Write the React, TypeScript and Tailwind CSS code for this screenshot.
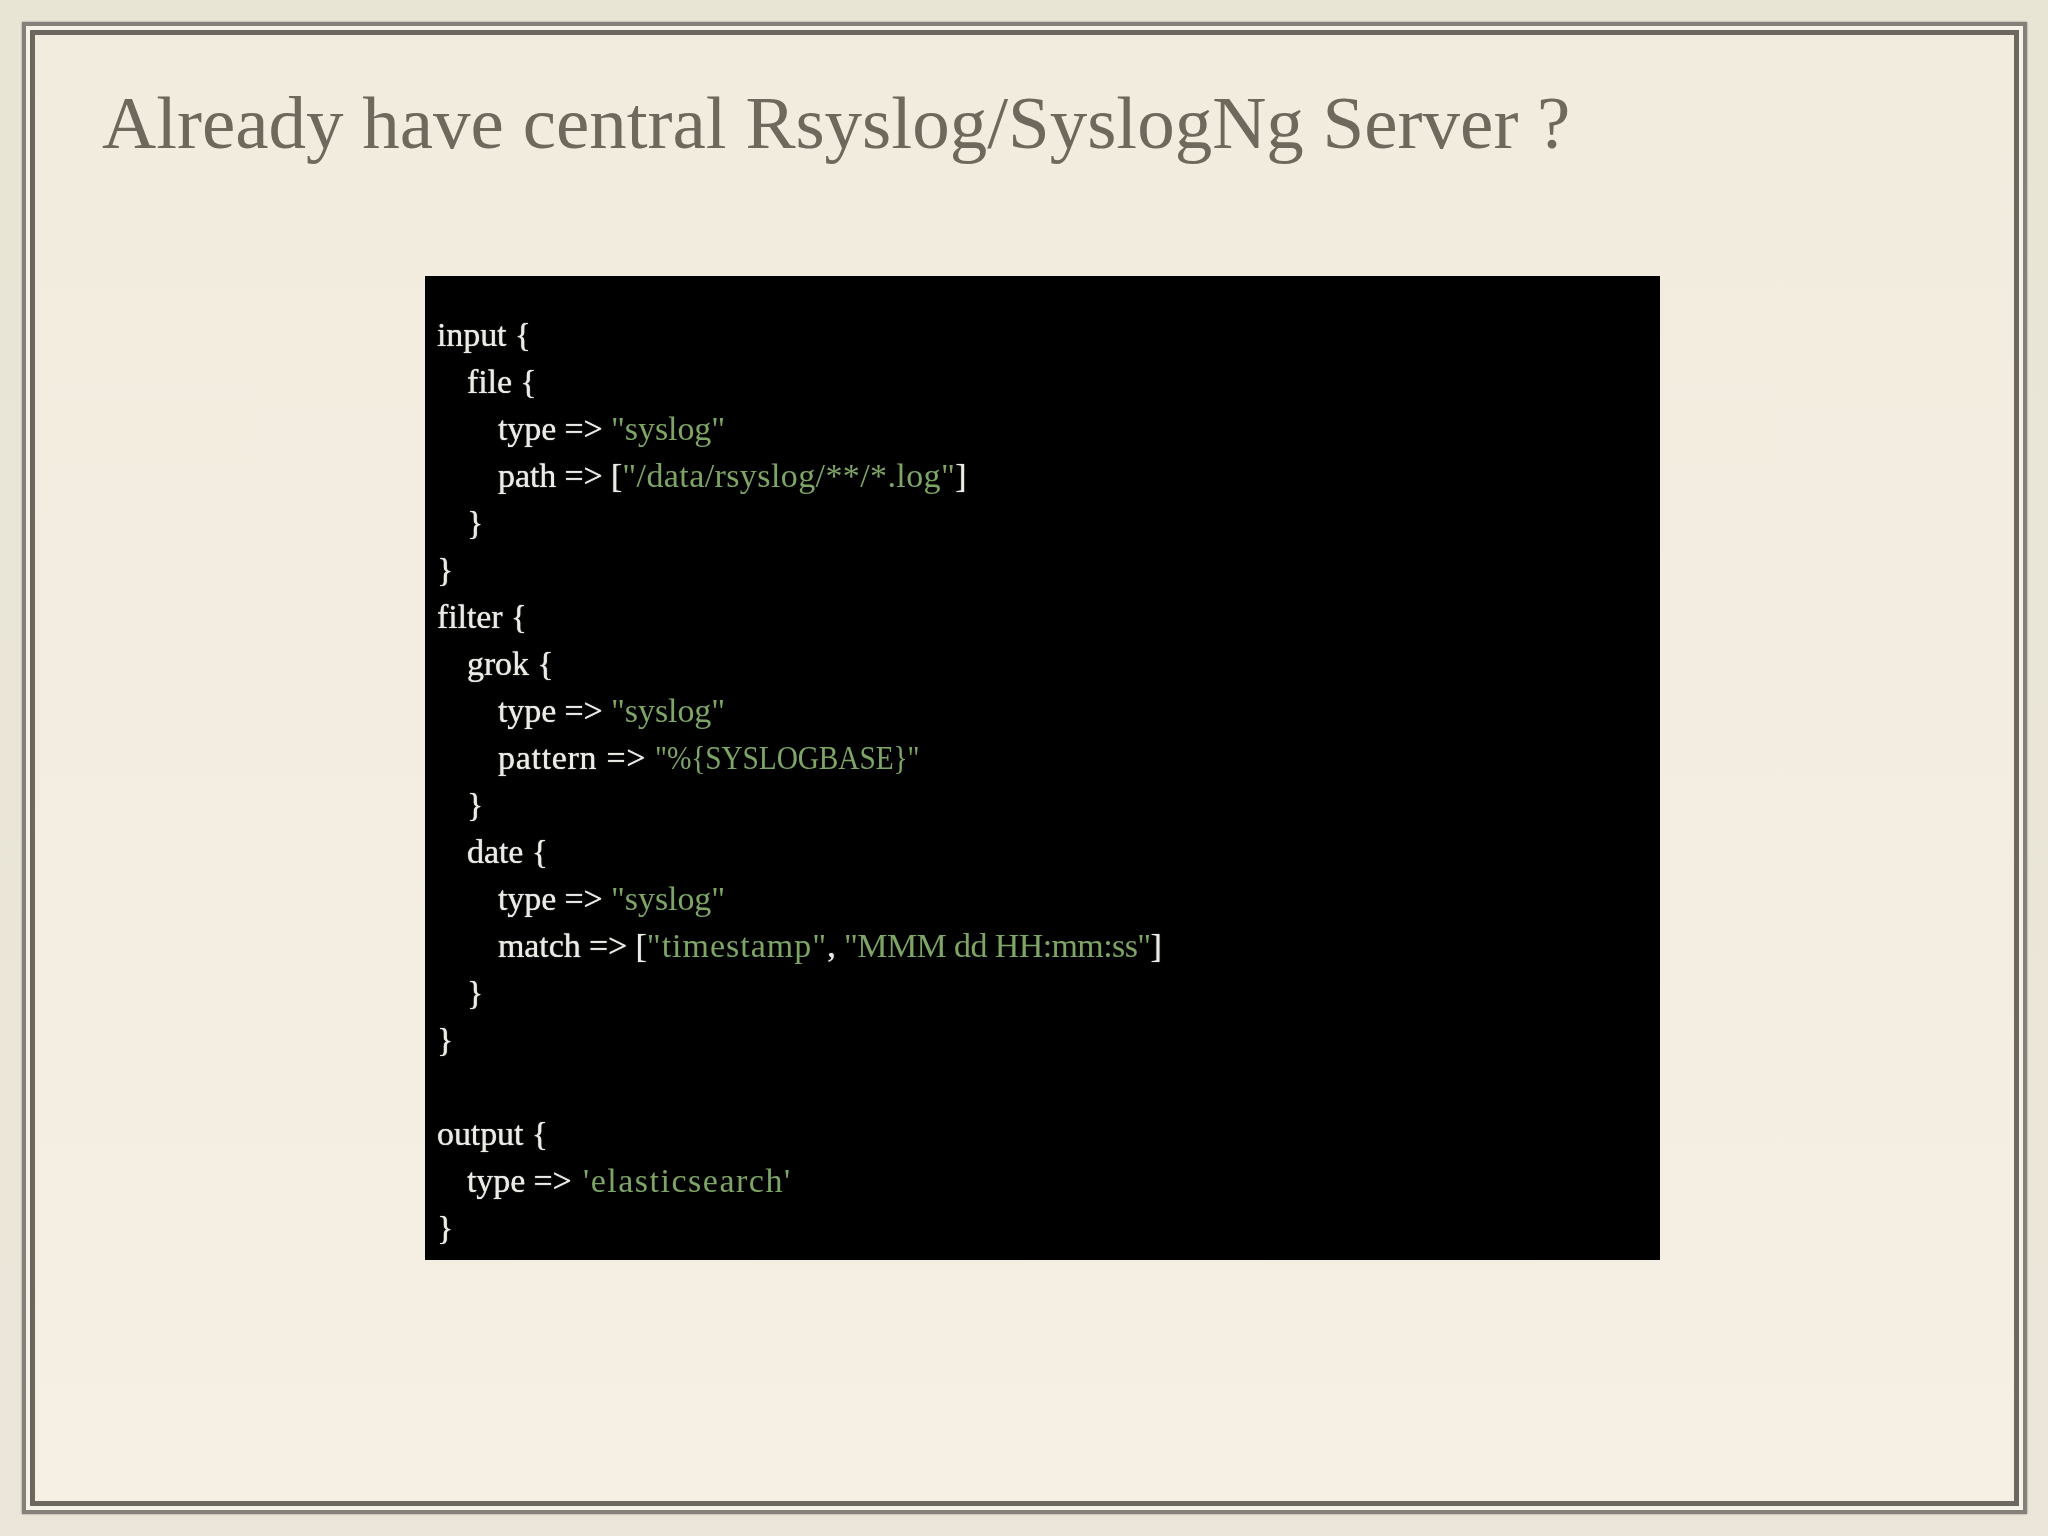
const STR = "text-[#7ea566] [text-shadow:none]";

const LINES: { indent: number; code: string; codeCls?: string; str?: string; cls?: string; end?: string }[] = [
  { indent: 0, code: "input {" },
  { indent: 1, code: "file {" },
  { indent: 2, code: "type => ", str: '"syslog"' },
  { indent: 2, code: "path => [", str: '"/data/rsyslog/**/*.log"', cls: "tracking-[0.4px]", end: "]" },
  { indent: 1, code: "}" },
  { indent: 0, code: "}" },
  { indent: 0, code: "filter {" },
  { indent: 1, code: "grok {" },
  { indent: 2, code: "type => ", str: '"syslog"' },
  { indent: 2, code: "pattern => ", codeCls: "tracking-[0.7px]", str: '"%{SYSLOGBASE}"', cls: "inline-block origin-left scale-x-[0.863]" },
  { indent: 1, code: "}" },
  { indent: 1, code: "date {" },
  { indent: 2, code: "type => ", str: '"syslog"' },
  { indent: 2, code: "match => [", str: '"timestamp"', cls: "tracking-[1px]" },
  { indent: 1, code: "}" },
  { indent: 0, code: "}" },
  { indent: 0, code: " " },
  { indent: 0, code: "output {" },
  { indent: 1, code: "type => ", str: "'elasticsearch'", cls: "ml-[3px] tracking-[1.5px]" },
  { indent: 0, code: "}" },
];

function CodeLine({ line }: { line: (typeof LINES)[number] }) {
  const pad = line.indent === 0 ? "pl-0" : line.indent === 1 ? "pl-[30px]" : "pl-[61px]";
  return (
    <div className={`h-[47px] whitespace-pre ${pad}`}>
      <span className={line.codeCls}>{line.code}</span>
      {line.str && <span className={`${STR} ${line.cls ?? ""}`}>{line.str}</span>}
      {line.end}
      {line.code.startsWith("match") && (
        <>
          <span>, </span>
          <span className={`${STR} tracking-[-0.6px]`}>"MMM dd HH:mm:ss"</span>]
        </>
      )}
    </div>
  );
}

export default function App() {
  return (
    <div className="w-[2048px] h-[1536px] overflow-hidden bg-gradient-to-b from-[#e9e5d5] to-[#ebe6d9] pt-[22px] pl-[22px] pr-[21px] pb-[22px] font-['Liberation_Serif',serif]">
      <div className="h-full border-[4px] border-[#85817a] bg-[#f6f2e8] p-[4px] shadow-[0_0_2px_#8d897f]">
        <div className="h-full border-[5px] border-[#6c685f] bg-gradient-to-b from-[#f1ecde] to-[#f5efe4] pl-[67px] pt-[44px]">
          <h1 className="text-[75px] leading-[88px] text-[#6f695d] blur-[0.4px]">
            Already have central Rsyslog/SyslogNg Server ?
          </h1>
          <div className="mt-[109px] ml-[323px] w-[1235px] h-[984px] bg-black pt-[35px] pl-[12px] text-[34px] leading-[47px] tracking-[-0.1px] text-[#ebebe6] blur-[0.5px] [text-shadow:0_0_1px_#ffffff]">
            {LINES.map((line, i) => (
              <CodeLine key={i} line={line} />
            ))}
          </div>
        </div>
      </div>
    </div>
  );
}
